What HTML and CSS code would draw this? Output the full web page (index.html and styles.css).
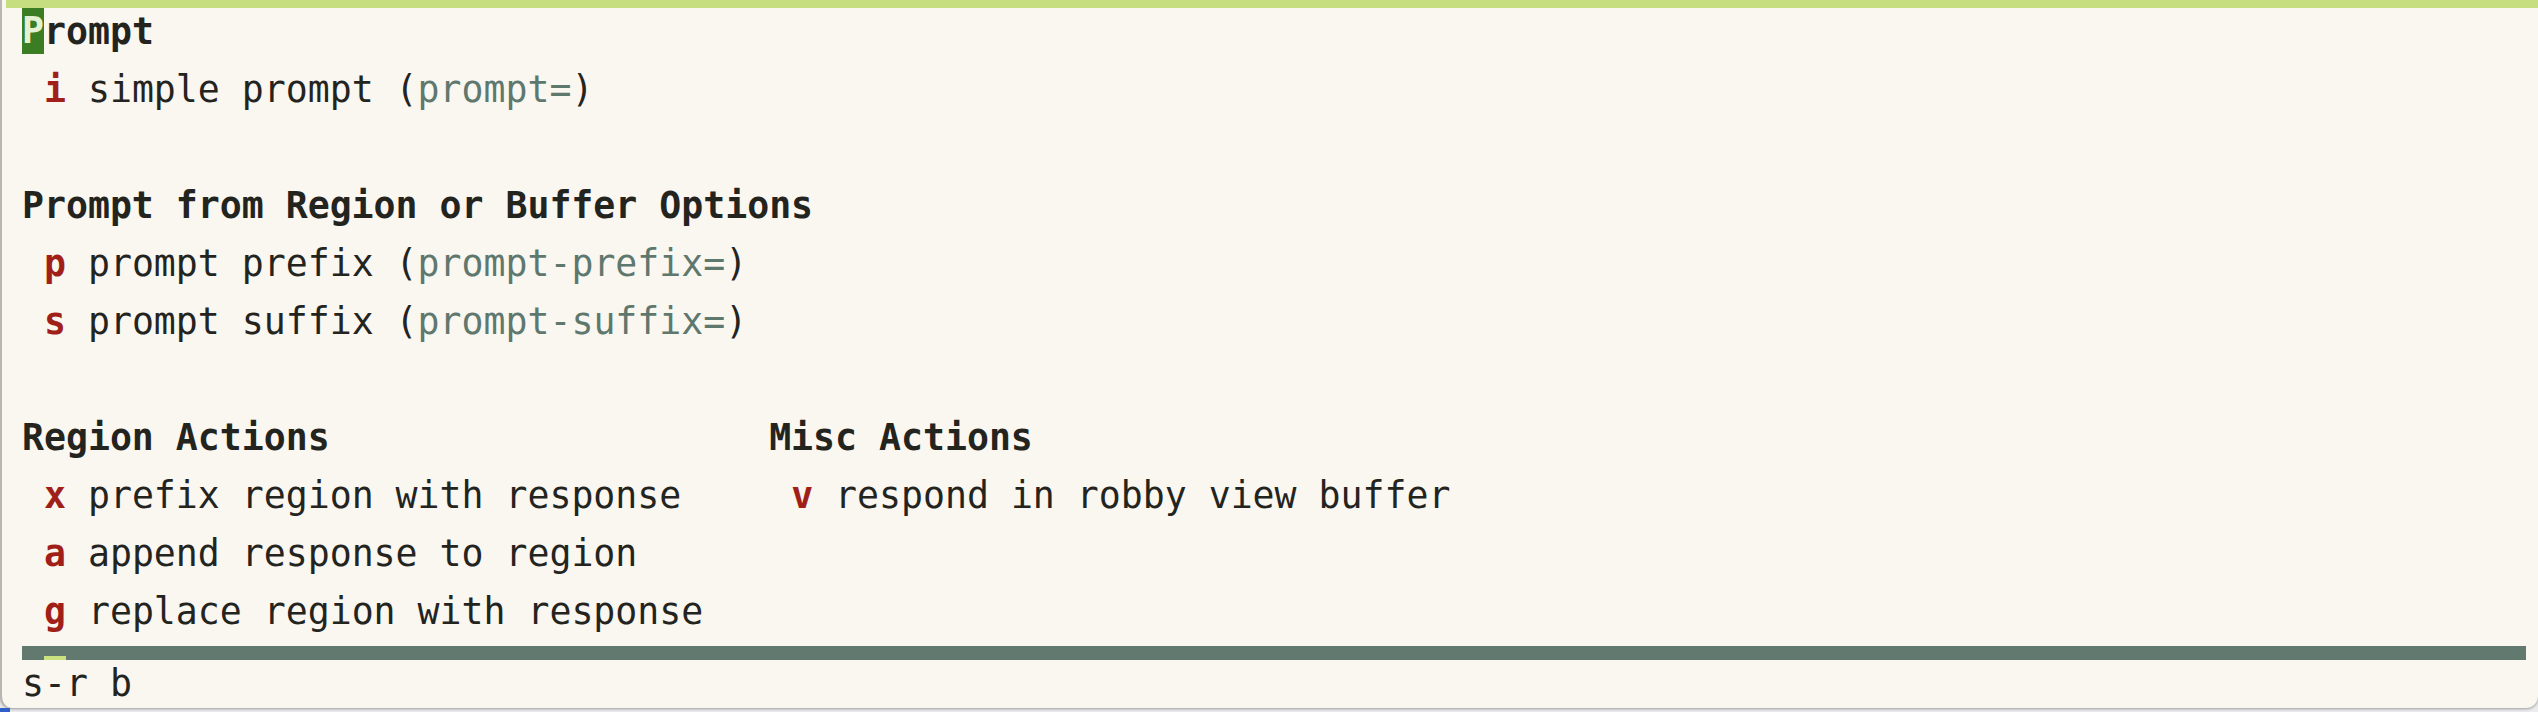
FILE: index.html
```html
<!DOCTYPE html>
<html lang="en">
<head>
<meta charset="utf-8">
<title>Transient</title>
<link rel="stylesheet" href="styles.css">
</head>
<body>
<div class="frame">
  <div class="topbar"></div>
  <div class="buffer">
    <div class="line heading"><span class="cursor">P</span>rompt</div>
    <div class="line"> <span class="key">i</span> simple prompt (<span class="arg">prompt=</span>)</div>
    <div class="line"></div>
    <div class="line heading">Prompt from Region or Buffer Options</div>
    <div class="line"> <span class="key">p</span> prompt prefix (<span class="arg">prompt-prefix=</span>)</div>
    <div class="line"> <span class="key">s</span> prompt suffix (<span class="arg">prompt-suffix=</span>)</div>
    <div class="line"></div>
    <div class="columns">
      <div class="col col-left">
        <div class="line heading">Region Actions</div>
        <div class="line"> <span class="key">x</span> prefix region with response</div>
        <div class="line"> <span class="key">a</span> append response to region</div>
        <div class="line"> <span class="key">g</span> replace region with response</div>
      </div>
      <div class="col">
        <div class="line heading">Misc Actions</div>
        <div class="line"> <span class="key">v</span> respond in robby view buffer</div>
      </div>
    </div>
  </div>
  <div class="divider"><span class="mini"></span></div>
  <div class="echo">s-r b</div>
</div>
<div class="below">
  <span class="blue"></span>
</div>
</body>
</html>
```

FILE: styles.css
```css
html, body {
  margin: 0;
  padding: 0;
}

body {
  width: 2538px;
  height: 712px;
  overflow: hidden;
  background: #ececee;
  font-family: "DejaVu Sans Mono", "Liberation Mono", monospace;
  font-size: 36.5px;
  color: #24241f;
}

.frame {
  height: 708px;
  box-sizing: border-box;
  background: #faf6f0;
  border-left: 2px solid #b9b7b3;
  border-radius: 0 0 12px 12px;
  box-shadow: 0 1px 3px rgba(0, 0, 0, 0.35);
  display: flex;
  flex-direction: column;
  overflow: hidden;
}

.topbar {
  height: 8px;
  margin-left: 4px;
  background: #c6de80;
  flex: none;
}

.buffer {
  padding-left: 20px;
  height: 638px;
  flex: none;
}

.line {
  height: 58px;
  box-sizing: border-box;
  padding-top: 1px;
  line-height: 46px;
  white-space: pre;
}

.heading {
  font-weight: bold;
}

.cursor {
  display: inline-block;
  height: 46px;
  margin-top: -1px;
  vertical-align: top;
  background: #3b7d22;
  color: #e4f1d2;
}

.key {
  color: #a11f19;
  font-weight: bold;
}

.arg {
  color: #5f786e;
}

.columns {
  display: flex;
}

.col-left {
  width: 34ch;
  flex: none;
}

.divider {
  height: 14px;
  margin-left: 20px;
  margin-right: 12px;
  background: #61796f;
  display: flex;
  align-items: flex-end;
  flex: none;
}

.mini {
  width: 22px;
  height: 4px;
  margin-left: 22px;
  background: #cbe07f;
}

.echo {
  padding-left: 20px;
  padding-top: 1px;
  line-height: 46px;
  height: 46px;
  white-space: pre;
}

.below {
  height: 4px;
  display: flex;
}

.blue {
  width: 10px;
  height: 4px;
  background: #2f5fc8;
}
```
